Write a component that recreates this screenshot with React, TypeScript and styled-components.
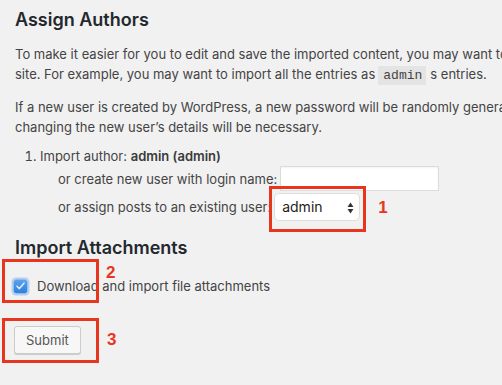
import React from 'react';
import styled, { createGlobalStyle } from 'styled-components';

const GlobalStyle = createGlobalStyle`
  html, body {
    margin: 0;
    padding: 0;
    background: #f1f1f1;
  }
  body {
    font-family: Inter, "Noto Sans", sans-serif;
    color: #444;
  }
`;

const Page = styled.div`
  position: relative;
  width: 502px;
  height: 385px;
  overflow: hidden;
  box-sizing: border-box;
  padding: 7px 0 0 15px;
  font-size: 13px;
  line-height: 20px;
`;

const Heading = styled.h2<{ $top?: number }>`
  margin: ${(p) => p.$top ?? 0}px 0 0 0;
  font-size: 18px;
  line-height: 26px;
  font-weight: 600;
  color: #23282d;
`;

const Para = styled.p`
  margin: 11px 0 0 0;
  white-space: nowrap;
`;

const Code = styled.code`
  font-family: "Liberation Mono", "DejaVu Sans Mono", monospace;
  font-size: 13px;
  background: #e4e4e4;
  padding: 2px 4px 2px 5px;
  margin: 0 4px 0 3px;
`;

const AuthorList = styled.ol`
  margin: 9px 0 0 0;
  padding: 0 0 0 25px;
`;

const AuthorItem = styled.li`
  strong {
    font-weight: 600;
    color: #3a3a3a;
  }
`;

const Options = styled.div`
  margin: 0 0 0 18px;
  display: flex;
  flex-direction: column;
  gap: 2px;
`;

const OptionRow = styled.div`
  display: flex;
  align-items: center;
  gap: 3px;
  white-space: nowrap;
`;

const TextInput = styled.input`
  width: 159px;
  height: 25px;
  box-sizing: border-box;
  border: 1px solid #dcdcdc;
  background: #fff;
  box-shadow: inset 0 1px 2px rgba(0, 0, 0, 0.05);
  margin: 0;
  padding: 0 6px;
  outline: none;
`;

const Annotated = styled.span`
  position: relative;
  display: inline-flex;
`;

const RedBox = styled.span<{ $l: number; $t: number; $w: number; $h: number }>`
  position: absolute;
  left: ${(p) => p.$l}px;
  top: ${(p) => p.$t}px;
  width: ${(p) => p.$w}px;
  height: ${(p) => p.$h}px;
  box-sizing: border-box;
  border: 3px solid #e8361e;
  pointer-events: none;
`;

const Marker = styled.span<{ $l: number; $t: number }>`
  position: absolute;
  left: ${(p) => p.$l}px;
  top: ${(p) => p.$t}px;
  font-family: "Liberation Sans", Arial, sans-serif;
  font-size: 17px;
  line-height: 17px;
  font-weight: 700;
  color: #e8361e;
`;

const SelectBox = styled.span`
  position: relative;
  display: inline-flex;
  align-items: center;
  width: 86px;
  height: 28px;
  box-sizing: border-box;
  border: 1px solid #dedede;
  border-radius: 5px;
  background: #fff;
  padding: 0 0 0 7px;
  font-size: 14px;
  color: #222;
`;

const Arrows = styled.svg`
  position: absolute;
  right: 5px;
  top: 8px;
`;

const CheckRow = styled.label`
  display: flex;
  align-items: center;
  gap: 9px;
  margin: 15px 0 0 -2px;
  white-space: nowrap;
`;

const CheckBox = styled.span`
  display: inline-flex;
  align-items: center;
  justify-content: center;
  width: 15px;
  height: 15px;
  box-sizing: border-box;
  border: 1px solid #8fbdf0;
  border-radius: 3px;
  background: linear-gradient(#5aa2ec, #2f7fdc);
  box-shadow: 0 0 0 1.5px rgba(120, 175, 235, 0.5);
`;

const SubmitRow = styled.div`
  margin: 30px 0 0 -1px;
`;

const Button = styled.button`
  height: 28px;
  padding: 0 11px;
  font-family: Inter, "Noto Sans", sans-serif;
  font-size: 13px;
  color: #555;
  background: #f7f7f7;
  border: 1px solid #cccccc;
  border-radius: 3px;
  box-shadow: 0 1px 0 #cccccc;
  cursor: pointer;
`;

export default function App() {
  return (
    <>
      <GlobalStyle />
      <Page>
        <Heading>Assign Authors</Heading>
        <Para>
          To make it easier for you to edit and save the imported content, you may want to reassign the author of the imported item to an existing user of this
          <br />
          site. For example, you may want to import all the entries as<Code>admin</Code>s entries.
        </Para>
        <Para>
          If a new user is created by WordPress, a new password will be randomly generated and the new user’s role will be set as subscriber. Manually
          <br />
          changing the new user’s details will be necessary.
        </Para>
        <AuthorList>
          <AuthorItem>
            Import author: <strong>admin (admin)</strong>
            <Options>
              <OptionRow>
                or create new user with login name:
                <TextInput type="text" />
              </OptionRow>
              <OptionRow>
                or assign posts to an existing user:
                <Annotated>
                  <SelectBox>
                    admin
                    <Arrows width="7" height="12" viewBox="0 0 7 12">
                      <path d="M3.5 0.5 L6.5 5 H0.5 Z" fill="#333" />
                      <path d="M3.5 11.5 L6.5 7 H0.5 Z" fill="#333" />
                    </Arrows>
                  </SelectBox>
                  <RedBox $l={-5} $t={-7} $w={97} $h={46} />
                  <Marker $l={104} $t={6}>1</Marker>
                </Annotated>
              </OptionRow>
            </Options>
          </AuthorItem>
        </AuthorList>
        <Heading $top={14}>Import Attachments</Heading>
        <CheckRow>
          <Annotated>
            <CheckBox>
              <svg width="11" height="10" viewBox="0 0 11 10">
                <path d="M2 5.2 L4.4 7.6 L9 2.2" stroke="#dcebfb" strokeWidth="1.6" fill="none" strokeLinecap="round" strokeLinejoin="round" />
              </svg>
            </CheckBox>
            <RedBox $l={-11} $t={-20} $w={97} $h={44} />
            <Marker $l={93} $t={-15}>2</Marker>
          </Annotated>
          Download and import file attachments
        </CheckRow>
        <SubmitRow>
          <Annotated>
            <Button type="button">Submit</Button>
            <RedBox $l={-12} $t={-8} $w={97} $h={45} />
            <Marker $l={93} $t={5}>3</Marker>
          </Annotated>
        </SubmitRow>
      </Page>
    </>
  );
}
